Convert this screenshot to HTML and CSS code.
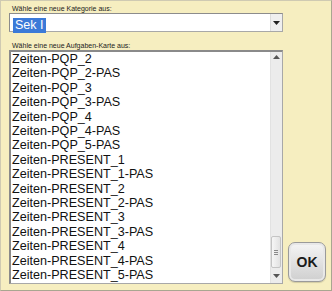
FILE: index.html
```html
<!DOCTYPE html>
<html>
<head>
<meta charset="utf-8">
<link rel="stylesheet" href="styles.css">
</head>
<body>
<div class="frame">
  <div class="main">
    <div class="label">Wähle eine neue Kategorie aus:</div>
    <div class="select">
      <div class="select-value"><span class="sel">Sek I</span></div>
      <div class="select-btn"><svg width="7" height="4" viewBox="0 0 7 4"><path d="M0 0H7L3.5 4Z" fill="#222"/></svg></div>
    </div>
    <div class="label label2">Wähle eine neue Aufgaben-Karte aus:</div>
    <div class="list">
      <div class="items">
        <div class="item">Zeiten-PQP_2</div>
        <div class="item">Zeiten-PQP_2-PAS</div>
        <div class="item">Zeiten-PQP_3</div>
        <div class="item">Zeiten-PQP_3-PAS</div>
        <div class="item">Zeiten-PQP_4</div>
        <div class="item">Zeiten-PQP_4-PAS</div>
        <div class="item">Zeiten-PQP_5-PAS</div>
        <div class="item">Zeiten-PRESENT_1</div>
        <div class="item">Zeiten-PRESENT_1-PAS</div>
        <div class="item">Zeiten-PRESENT_2</div>
        <div class="item">Zeiten-PRESENT_2-PAS</div>
        <div class="item">Zeiten-PRESENT_3</div>
        <div class="item">Zeiten-PRESENT_3-PAS</div>
        <div class="item">Zeiten-PRESENT_4</div>
        <div class="item">Zeiten-PRESENT_4-PAS</div>
        <div class="item">Zeiten-PRESENT_5-PAS</div>
      </div>
      <div class="scrollbar">
        <div class="arrow"><svg width="7" height="4" viewBox="0 0 7 4"><path d="M0 4H7L3.5 0Z" fill="#555"/></svg></div>
        <div class="track"></div>
        <div class="thumb"><span></span><span></span><span></span></div>
        <div class="arrow down"><svg width="7" height="4" viewBox="0 0 7 4"><path d="M0 0H7L3.5 4Z" fill="#555"/></svg></div>
      </div>
    </div>
  </div>
  <div class="side">
    <button class="ok">OK</button>
  </div>
</div>
</body>
</html>
```
FILE: styles.css
```css
html, body {
  margin: 0;
  padding: 0;
  background: #f6eec0;
}
.frame {
  width: 332px;
  height: 291px;
  box-sizing: border-box;
  background: #f6eec0;
  border: 1px solid #cfcab2;
  border-right-color: #a9a690;
  border-bottom-color: #a9a690;
  padding: 3px 0 0 8px;
  display: flex;
  font-family: "Liberation Sans", Arial, sans-serif;
}
.main {
  width: 274px;
  display: flex;
  flex-direction: column;
}
.label {
  font-size: 7px;
  line-height: 9px;
  height: 9px;
  color: #222;
  padding-left: 3px;
}
.label2 {
  margin-top: 9px;
}
.select {
  height: 19px;
  box-sizing: border-box;
  border: 1px solid #a8a8a8;
  border-top-color: #8c8c8c;
  border-left-color: #8c8c8c;
  background: #fff;
  display: flex;
}
.select-value {
  flex: 1;
  padding: 1px 0 0 3px;
}
.sel {
  display: inline-block;
  background: #3b7ad8;
  color: #fff;
  font-size: 12.5px;
  line-height: 15px;
  padding: 0 2px 0 2px;
}
.select-btn {
  width: 11px;
  background: #efefef;
  border-left: 1px solid #dcdcdc;
  display: flex;
  align-items: center;
  justify-content: center;
}
.list {
  height: 234px;
  box-sizing: border-box;
  border: 1px solid #a8a8a8;
  border-top: 2px solid #8a8a8a;
  border-left: 2px solid #8a8a8a;
  background: #fff;
  display: flex;
  overflow: hidden;
}
.items {
  flex: 1;
  overflow: hidden;
  padding-left: 1px;
}
.item {
  font-size: 12.6px;
  line-height: 14.4px;
  white-space: nowrap;
  color: #111;
}
.scrollbar {
  width: 11px;
  background: #ececec;
  border-left: 1px solid #e2e2e2;
  display: flex;
  flex-direction: column;
}
.arrow {
  height: 10px;
  display: flex;
  align-items: center;
  justify-content: center;
}
.track {
  flex: 1;
}
.thumb {
  height: 32px;
  margin: 0 1px 3px 0;
  box-sizing: border-box;
  border: 1px solid #c4c4c4;
  border-radius: 2px;
  background: linear-gradient(to right, #f6f6f6, #e2e2e2);
  display: flex;
  flex-direction: column;
  align-items: center;
  justify-content: center;
  gap: 1px;
}
.thumb span {
  width: 4px;
  height: 1px;
  background: #8a8a8a;
}
.arrow.down {
  margin-bottom: 2px;
}
.side {
  display: flex;
  align-items: flex-end;
  padding: 0 0 8px 5px;
}
.ok {
  width: 38px;
  height: 40px;
  border: 1px solid #9a9a9a;
  border-radius: 7px;
  background: linear-gradient(#f5f5f5, #dedede 60%, #cfcfcf);
  box-shadow: inset 0 0 0 2px #e8e8e8, 0 1px 1px rgba(0,0,0,0.15);
  font-family: "Liberation Sans", Arial, sans-serif;
  font-weight: bold;
  font-size: 14px;
  color: #1a1a1a;
  padding: 0;
}
```
